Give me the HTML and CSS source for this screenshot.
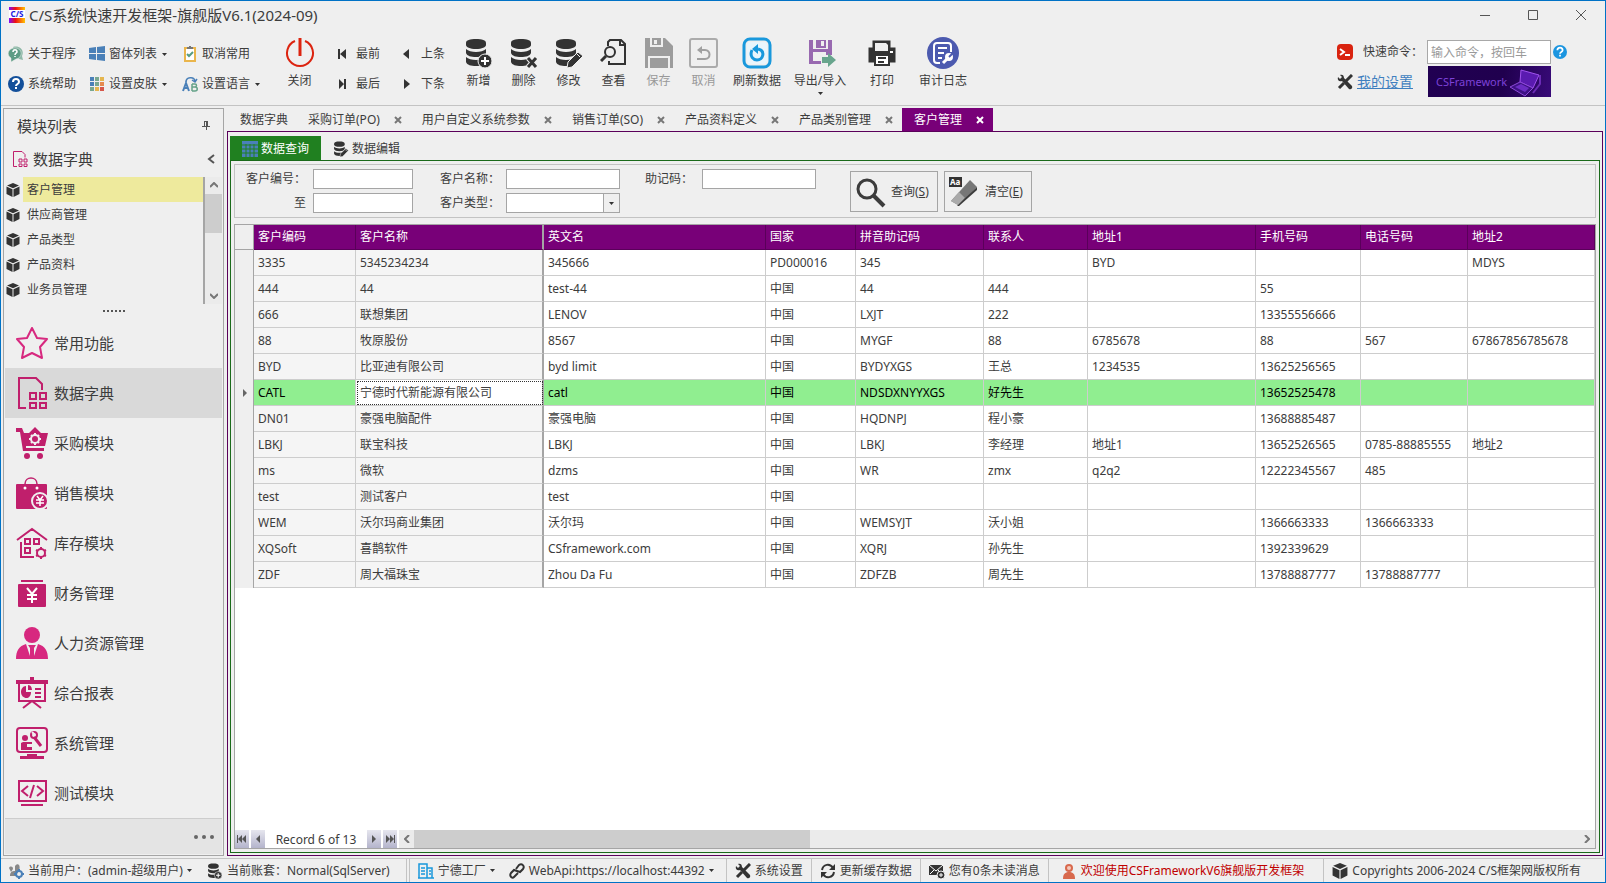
FILE: index.html
```
<!DOCTYPE html>
<html lang="zh-CN">
<head>
  <meta charset="UTF-8">
  <meta name="viewport" content="width=device-width, initial-scale=1.0">
  <title>C/S系统快速开发框架-旗舰版V6.1(2024-09)</title>
  <link rel="stylesheet" href="styles.css">
</head>
<body>

  <!-- Shared icons -->
  <svg class="sprite" aria-hidden="true">
    <symbol id="db" viewBox="0 0 28 30">
      <path d="M1 5c0-3 4-4 10-4s10 1 10 4v2c0 2-4 4-10 4S1 9 1 7zM1 11c2 2 6 3 10 3s8-1 10-3v4c-1 3-5 4-10 4S2 18 1 15zM1 19c2 2 6 3 10 3s8-1 10-3v5c-1 3-5 4-10 4S2 27 1 24z"/>
    </symbol>
    <symbol id="db-add" viewBox="0 0 28 30">
      <use href="#db" width="28" height="30"/>
      <circle cx="20" cy="23" r="7" fill="#333" stroke="#efefef"/>
      <path d="M20 19v8M16 23h8" stroke="#fff" stroke-width="2"/>
    </symbol>
    <symbol id="db-edit" viewBox="0 0 28 30">
      <use href="#db" width="28" height="30"/>
      <path d="M12 30l1-6 10-10 5 4-11 11z" stroke="#efefef"/>
      <path d="M22 16l3 3" stroke="#efefef"/>
    </symbol>
    <symbol id="cube" viewBox="0 0 14 14">
      <path d="M7 0l6 2.500-6 2.700L1 2.500zM0.500 3.500l6 2.800V14l-6-3zM13.500 3.500l-6 2.800V14l6-3z"/>
    </symbol>
    <symbol id="tools" viewBox="0 0 16 16">
      <path d="M1 3l2 2 2-2-2-2c2-1 4 0 4 3l8 8c1 2-1 4-3 3L5 7C2 8 0 6 1 3z"/>
      <path d="M15 1l-6 6M7 9l-5 5" stroke="#333" stroke-width="3"/>
    </symbol>
    <symbol id="dict" viewBox="0 0 32 32">
      <path d="M10 31H3V1h17l6 6v6" fill="none" stroke="#c01f6c" stroke-width="2"/>
      <path d="M14 16h6v6h-6zM24 16h6v6h-6zM14 26h6v5h-6zM24 26h6v5h-6z" fill="none" stroke="#c01f6c" stroke-width="2"/>
    </symbol>
    <symbol id="help" viewBox="0 0 16 16">
      <circle cx="8" cy="8" r="8"/>
      <path d="M5 6c0-4 6-4 6 0 0 2-3 2-3 4" fill="none" stroke="#fff" stroke-width="2"/>
      <path d="M7 11h2v2H7z" fill="#fff"/>
    </symbol>
    <symbol id="caret" viewBox="0 0 5 3"><path d="M0 0h5L2.500 3z"/></symbol>
    <symbol id="cross" viewBox="0 0 8 8"><path d="M1 1l6 6M7 1L1 7" stroke="currentColor" stroke-width="2"/></symbol>
  </svg>

  <div class="window">
    <header class="titlebar">
      <svg class="icon16" viewBox="0 0 16 16">
        <defs><linearGradient id="logo"><stop offset="0" stop-color="#7b0cff"/><stop offset="0.400" stop-color="#f01010"/><stop offset="1" stop-color="#ffc400"/></linearGradient></defs>
        <rect width="16" height="16" fill="url(#logo)"/>
        <rect y="3" width="16" height="8" fill="#fff"/>
        <text x="8" y="10" text-anchor="middle" class="logo-text">C/S</text>
      </svg>
      <h1>C/S系统快速开发框架-旗舰版V6.1(2024-09)</h1>
      <div class="window-buttons">
        <button aria-label="最小化"><svg width="10" height="10"><path d="M0 5.500h10"/></svg></button>
        <button aria-label="最大化"><svg width="10" height="10"><path d="M0.500 0.500h9v9h-9z"/></svg></button>
        <button aria-label="关闭窗口"><svg width="10" height="10"><path d="M0 0l10 10M10 0L0 10"/></svg></button>
      </div>
    </header>

    <div class="ribbon">
      <div class="small-group col-about">
        <button><svg class="icon16" viewBox="0 0 16 16"><path d="M5 1c6-2 12 3 9 9l1 4-4-1" fill="#8fb9a8"/><path d="M7 2c8 0 8 10 1 11l-5 3v-4C-2 9 0 2 7 2z" fill="#5e9c85" stroke="#efefef" stroke-width="0.500"/><path d="M5 6c0-3 4-3 4 0 0 1-2 1-2 3M7 10v1" fill="none" stroke="#fff" stroke-width="1.500"/></svg>关于程序</button>
        <button><svg class="icon16" fill="#134f9a"><use href="#help"/></svg>系统帮助</button>
      </div>
      <div class="small-group col-forms">
        <button><svg class="icon16" viewBox="0 0 16 16" fill="#4a80b8"><path d="M0 2l7-1v6H0zM8 1l8-1v7H8zM0 8h7v6l-7-1zM8 8h8v7l-8-1z"/></svg>窗体列表<svg class="caret"><use href="#caret"/></svg></button>
        <button><svg class="icon16" viewBox="0 0 16 16"><path d="M1 1h4v4H1zM1 6h4v4H1z" fill="#4a80b8"/><path d="M1 11h4v4H1zM6 6h4v4H6zM6 1h4v4H6z" fill="#78a790"/><path d="M11 1h4v4h-4zM6 11h4v4H6z" fill="#e5b64f"/><path d="M11 6h4v4h-4z" fill="#e58a4f"/><path d="M11 11h4v4h-4z" fill="#d6574a"/></svg>设置皮肤<svg class="caret"><use href="#caret"/></svg></button>
      </div>
      <div class="small-group col-lang">
        <button><svg class="icon16" viewBox="0 0 16 16"><path d="M3 2h10v13H3z" fill="#fff" stroke="#eab54b" stroke-width="2"/><path d="M5 3V1h2V0h2v1h2v2z" fill="#777"/><path d="M5 8l2 2 4-4" fill="none" stroke="#589c82" stroke-width="2"/></svg>取消常用</button>
        <button><svg class="icon16" viewBox="0 0 16 16"><path d="M1 15l3-8 3 8M2 12h4" fill="none" stroke="#4a80b8" stroke-width="2"/><path d="M10 8v7M10 8h3c2 0 2 3 0 3h-3 3c3 0 3 4 0 4h-3" fill="none" stroke="#65a389" stroke-width="1.500"/><path d="M4 6c0-5 8-6 9-1M10 4l3 2 2-3" fill="none" stroke="#4a80b8" stroke-width="1.500"/></svg>设置语言<svg class="caret"><use href="#caret"/></svg></button>
      </div>

      <button class="big close-btn"><svg width="32" height="32" viewBox="0 0 32 32" fill="none" stroke="#dc2410" stroke-width="2"><path d="M11 4a13 13 0 1 0 10 0"/><path d="M16 1v18" stroke-width="3"/></svg>关闭</button>

      <div class="small-group col-first">
        <button><svg class="icon16" viewBox="0 0 16 16"><path d="M4 3h2v10H4zM12 3v10L6 8z"/></svg>最前</button>
        <button><svg class="icon16" viewBox="0 0 16 16"><path d="M10 3h2v10h-2zM5 3v10l5-5z"/></svg>最后</button>
      </div>
      <div class="small-group col-step">
        <button><svg class="icon16" viewBox="0 0 16 16"><path d="M10 3v10L4 8z"/></svg>上条</button>
        <button><svg class="icon16" viewBox="0 0 16 16"><path d="M5 3v10l6-5z"/></svg>下条</button>
      </div>

      <div class="big-group">
        <button class="big"><svg width="28" height="32"><use href="#db-add"/></svg>新增</button>
        <button class="big"><svg width="28" height="32" viewBox="0 0 28 30"><use href="#db" width="28" height="30"/><path d="M18 20l8 9M26 20l-8 9" stroke="#efefef" stroke-width="5"/><path d="M18 20l8 9M26 20l-8 9" stroke="#333" stroke-width="3"/></svg>删除</button>
        <button class="big"><svg width="28" height="32"><use href="#db-edit"/></svg>修改</button>
        <button class="big"><svg width="28" height="32" viewBox="0 0 28 32" fill="none" stroke="#333"><path d="M8 9V5l2-2h11l4 4v20H9v-3M20 3v5h5" stroke-width="2"/><circle cx="10" cy="15" r="5" stroke-width="2"/><path d="M6 19l-5 5" stroke-width="3"/></svg>查看</button>
        <button class="big" disabled><svg width="32" height="32" viewBox="0 0 32 32" fill="#9c9c9c"><path d="M2 1h20l8 8v22h-3V19H5v12H2z"/><path d="M7 1h13v9H7z" fill="#efefef"/><path d="M9 1h9v7H9z"/><path d="M11 3h3v4h-3z" fill="#efefef"/><path d="M7 21h18v10H7z"/></svg>保存</button>
        <button class="big" disabled><svg width="32" height="32" viewBox="0 0 32 32" fill="none" stroke="#ababab"><rect x="2" y="2" width="27" height="28" rx="2" stroke-width="2"/><path d="M9 22h8c6 0 6-9 0-9h-6" stroke="#a0a0a0" stroke-width="2"/><path d="M9 13l5-4v8z" fill="#a0a0a0" stroke="none"/></svg>取消</button>
        <button class="big wide"><svg width="32" height="32" viewBox="0 0 32 32" fill="none" stroke="#1998dc"><rect x="3" y="2" width="26" height="28" rx="6" stroke-width="3"/><rect x="6" y="5" width="20" height="22" rx="4" fill="#e9f5fc" stroke="none"/><path d="M11 13c-3 7 2 10 5 10 6 0 9-9 1-11" stroke-width="3"/><path d="M17 7v10l-6-5z" fill="#1998dc" stroke="none"/></svg>刷新数据</button>
        <button class="big export"><svg width="32" height="32" viewBox="0 0 32 32"><path d="M5 3h23v15h-6v-3H9v9h8v3H5z" fill="#9869b0"/><path d="M9 3h15v9H9z" fill="#efefef"/><path d="M12 3h10v8H12z" fill="#9869b0"/><path d="M17 4h3v5h-3z" fill="#efefef"/><path d="M18 20h6v-4l8 7-8 7v-4h-6z" fill="#68a58d"/></svg>导出/导入<svg class="caret"><use href="#caret"/></svg></button>
        <button class="big print"><svg width="32" height="32" viewBox="0 0 32 32"><path d="M8 13V5h15v8M4 12h24v12H4z" stroke="#333" stroke-width="3" fill="#333"/><path d="M9 6h11l2 2v6H9z" fill="#efefef"/><path d="M9 18h14v10H9z" fill="#fff" stroke="#333" stroke-width="2"/><path d="M12 21h8M12 25h6" stroke="#333" stroke-width="2"/><path d="M24 14h3v2h-3z" fill="#fff"/></svg>打印</button>
        <button class="big wide"><svg width="32" height="32" viewBox="0 0 32 32" fill="none" stroke="#fff" stroke-width="2"><circle cx="16" cy="16" r="16" fill="#4c5aaf" stroke="none"/><path d="M13 26h-3c-2 0-3-1-3-3V9c0-2 1-3 3-3h11c2 0 3 1 3 3v6M11 11h9M11 16h6M11 21h4"/><path d="M16 26l5-5" stroke-width="3"/><circle cx="22" cy="20" r="3" fill="#fff"/><path d="M22 20l4-4" stroke="#4c5aaf"/></svg>审计日志</button>
      </div>

      <div class="quick">
        <div class="quick-row">
          <svg class="icon16" viewBox="0 0 16 16"><rect width="16" height="16" rx="4" fill="#d9230f"/><path d="M3 5l4 3-4 3M8 11h5" fill="none" stroke="#fff" stroke-width="2"/></svg>
          <label for="command">快速命令：</label>
          <input type="text" id="command" placeholder="输入命令，按回车">
          <svg class="icon14" viewBox="0 0 16 16" fill="#1b95e0"><use href="#help"/></svg>
        </div>
        <div class="quick-row">
          <svg class="icon16"><use href="#tools"/></svg>
          <a href="#">我的设置</a>
          <div class="banner">
            <span>CSFramework</span>
            <svg width="34" height="30" viewBox="0 0 34 30"><path d="M12 3l18 5-6 13-13-6z" fill="#5a1bb0" stroke="#a052ee"/><path d="M1 20l10-5 13 6-8 8z" fill="#3d1184" stroke="#8d49d8"/><path d="M6 20l6-3 8 4-4 4z" fill="#6c2cc4"/><path d="M31 8v9l-7 9" fill="none" stroke="#6b2bb5" stroke-width="2"/></svg>
          </div>
        </div>
      </div>
    </div>

    <div class="workspace">
      <aside class="sidebar">
        <div class="side-title"><h2>模块列表</h2>
          <button aria-label="固定"><svg width="8" height="10" viewBox="0 0 8 10"><path d="M2 0h4v5h2v1H5v3H4V6H0V5h2z" fill="#555"/><path d="M3 1h1v4H3z" fill="#efefef"/></svg></button>
        </div>
        <div class="side-title side-group"><svg class="icon16"><use href="#dict"/></svg><h2>数据字典</h2>
          <button aria-label="折叠"><svg width="8" height="10" viewBox="0 0 8 10" fill="none" stroke="#555" stroke-width="2"><path d="M7 1L2 5l5 4"/></svg></button>
        </div>
        <div class="tree">
          <ul>
            <li class="current"><svg class="icon14"><use href="#cube"/></svg><a href="#">客户管理</a></li>
            <li><svg class="icon14"><use href="#cube"/></svg><a href="#">供应商管理</a></li>
            <li><svg class="icon14"><use href="#cube"/></svg><a href="#">产品类型</a></li>
            <li><svg class="icon14"><use href="#cube"/></svg><a href="#">产品资料</a></li>
            <li><svg class="icon14"><use href="#cube"/></svg><a href="#">业务员管理</a></li>
          </ul>
          <div class="vscroll">
            <svg width="8" height="6"><path d="M0 5l4-4 4 4"/></svg>
            <div class="vthumb"></div>
            <svg width="8" height="6"><path d="M0 1l4 4 4-4"/></svg>
          </div>
        </div>
        <div class="splitter"></div>
        <nav class="modules">
          <a href="#"><svg viewBox="0 0 32 32"><path d="M16 1l5 10 10 1-7 8 2 11-10-5-10 5 2-11-7-8 10-1z" fill="none" stroke="#d7287f" stroke-width="2" stroke-linejoin="round"/></svg>常用功能</a>
          <a href="#" class="active"><svg><use href="#dict"/></svg>数据字典</a>
          <a href="#"><svg viewBox="0 0 32 32"><path d="M0 1h6l2 5h24l-3 13H10v2h18v3H7L4 5H0zM13 6l6-6 6 6z"/><circle cx="11" cy="29" r="3"/><circle cx="24" cy="29" r="3"/><circle cx="19" cy="12" r="4" fill="none" stroke="#efefef" stroke-width="2"/><path d="M19 6v2M19 16v2M13 12h2M23 12h2M15 8l1 1M22 15l1 1M23 8l-1 1M16 15l-1 1" stroke="#efefef" stroke-width="2"/></svg>采购模块</a>
          <a href="#"><svg viewBox="0 0 32 32"><rect y="7" width="31" height="25" rx="1"/><path d="M9 10V7c0-8 12-8 12 0v3" fill="none" stroke="#c01f6c" stroke-width="1.500"/><circle cx="9" cy="11" r="1.500" fill="#fff"/><circle cx="21" cy="11" r="1.500" fill="#fff"/><circle cx="24" cy="24" r="8" stroke="#efefef" stroke-width="2"/><path d="M21 19l3 4 3-4M20 23h8M20 26h8M24 23v6" fill="none" stroke="#fff" stroke-width="1.500"/></svg>销售模块</a>
          <a href="#"><svg viewBox="0 0 32 32" fill="none" stroke="#c01f6c" stroke-width="2"><path d="M1 13L16 2l15 11M5 15v15h13M9 12h5v5H9zM18 12h5v5h-5zM9 21h5v5H9z"/><circle cx="25" cy="26" r="4"/><path d="M25 20v2M25 30v2M20 23l2 1M28 28l2 1M30 23l-2 1M22 28l-2 1"/></svg>库存模块</a>
          <a href="#"><svg viewBox="0 0 32 32"><path d="M5 3h22v2H5z"/><rect x="2" y="7" width="28" height="23" rx="1"/><path d="M11 11l5 6 5-6M11 18h10M11 22h10M16 17v9" fill="none" stroke="#fff" stroke-width="2"/></svg>财务管理</a>
          <a href="#"><svg viewBox="0 0 32 32" fill="#d7287f"><circle cx="16" cy="8" r="8"/><path d="M0 32c0-8 3-13 10-15l4 12v-8l-2-3h8l-2 3v8l4-12c7 2 10 7 10 15z"/></svg>人力资源管理</a>
          <a href="#"><svg viewBox="0 0 32 32"><path d="M14 0h4v3h14v4H0V3h14z"/><path d="M3 7v17h26V7M7 31l9-7 9 7" fill="none" stroke="#c01f6c" stroke-width="2"/><path d="M10 9v6h5c0 9-10 7-10 0 0-3 2-6 5-6zM12 8c3 0 4 3 4 5h-4zM19 11h6v2h-6zM19 15h6v2h-6zM19 19h6v2h-6z"/></svg>综合报表</a>
          <a href="#"><svg viewBox="0 0 32 32"><rect x="1" y="1" width="30" height="24" rx="3" fill="none" stroke="#c01f6c" stroke-width="2"/><circle cx="9" cy="11" r="3"/><path d="M5 23v-7l2-1h9v2h-5v3h5v3zM11 27h10v2h7v3H4v-3h7z"/><path d="M18 10l7 9" stroke="#c01f6c" stroke-width="3"/><circle cx="18" cy="8" r="3" fill="none" stroke="#c01f6c" stroke-width="2"/><path d="M16 5l3 3" stroke="#efefef" stroke-width="2"/></svg>系统管理</a>
          <a href="#"><svg viewBox="0 0 32 32" fill="none" stroke="#c01f6c" stroke-width="2"><path d="M3 4h27v20H3zM5 28h22M12 9l-6 5 6 5M21 9l6 5-6 5M18 8l-4 13"/></svg>测试模块</a>
        </nav>
        <div class="side-footer"><button aria-label="更多"><svg width="20" height="4"><circle cx="2" cy="2" r="2"/><circle cx="10" cy="2" r="2"/><circle cx="18" cy="2" r="2"/></svg></button></div>
      </aside>

      <main>
        <div class="tabs">
          <button>数据字典</button>
          <button>采购订单(PO)<svg><use href="#cross"/></svg></button>
          <button>用户自定义系统参数<svg><use href="#cross"/></svg></button>
          <button>销售订单(SO)<svg><use href="#cross"/></svg></button>
          <button>产品资料定义<svg><use href="#cross"/></svg></button>
          <button>产品类别管理<svg><use href="#cross"/></svg></button>
          <button class="active">客户管理<svg><use href="#cross"/></svg></button>
        </div>

        <div class="page">
          <div class="subtabs">
            <button class="active"><svg class="icon16" viewBox="0 0 16 16"><path d="M0 0h16v16H0z" fill="#4a80b8"/><path d="M4 3v13M8 3v13M12 3v13M0 4h16M0 8h16M0 12h16" stroke="#208020"/></svg>数据查询</button>
            <button><svg class="icon16"><use href="#db-edit"/></svg>数据编辑</button>
          </div>

          <div class="content">
            <form class="search">
              <div class="fields codes">
                <label for="codeFrom">客户编号：</label><input type="text" id="codeFrom">
                <label for="codeTo">至</label><input type="text" id="codeTo">
              </div>
              <div class="fields names">
                <label for="custName">客户名称：</label><input type="text" id="custName">
                <label for="custType">客户类型：</label>
                <div class="select-wrap"><select id="custType"><option></option></select><span><svg class="caret"><use href="#caret"/></svg></span></div>
              </div>
              <div class="fields memo">
                <label for="memo">助记码：</label><input type="text" id="memo">
              </div>
              <div class="actions">
                <button type="button"><svg width="32" height="32" viewBox="0 0 32 32" fill="none" stroke="#3c3c3c"><circle cx="13" cy="13" r="9" stroke-width="3"/><path d="M19 19l11 11" stroke-width="4"/></svg>查询(<u>S</u>)</button>
                <button type="button"><svg width="32" height="32" viewBox="0 0 32 32"><rect x="1" y="1" width="13" height="10"/><text x="2" y="9" class="aa">Aa</text><path d="M3 25L22 4l7 7-19 18z" fill="#777"/><path d="M3 25l8-9 6 6-7 7z" fill="#aaa"/><path d="M17 22l12-11v3L11 30H9z" fill="#3c3c3c"/></svg>清空(<u>E</u>)</button>
              </div>
            </form>

            <div class="grid">
              <div class="grid-body">
                <table>
                  <colgroup>
                    <col class="c-mark"><col class="c-code"><col class="c-name"><col class="c-en"><col class="c-country"><col class="c-py"><col class="c-contact"><col class="c-addr"><col class="c-mobile"><col class="c-phone"><col>
                  </colgroup>
                  <thead>
                    <tr><th></th><th>客户编码</th><th>客户名称</th><th>英文名</th><th>国家</th><th>拼音助记码</th><th>联系人</th><th>地址1</th><th>手机号码</th><th>电话号码</th><th>地址2</th></tr>
                  </thead>
                  <tbody>
                    <tr><td></td><td>3335</td><td>5345234234</td><td>345666</td><td>PD000016</td><td>345</td><td></td><td>BYD</td><td></td><td></td><td>MDYS</td></tr>
                    <tr><td></td><td>444</td><td>44</td><td>test-44</td><td>中国</td><td>44</td><td>444</td><td></td><td>55</td><td></td><td></td></tr>
                    <tr><td></td><td>666</td><td>联想集团</td><td>LENOV</td><td>中国</td><td>LXJT</td><td>222</td><td></td><td>13355556666</td><td></td><td></td></tr>
                    <tr><td></td><td>88</td><td>牧原股份</td><td>8567</td><td>中国</td><td>MYGF</td><td>88</td><td>6785678</td><td>88</td><td>567</td><td>67867856785678</td></tr>
                    <tr><td></td><td>BYD</td><td>比亚迪有限公司</td><td>byd limit</td><td>中国</td><td>BYDYXGS</td><td>王总</td><td>1234535</td><td>13625256565</td><td></td><td></td></tr>
                    <tr class="selected"><td><svg width="4" height="8"><path d="M0 0l4 4-4 4z"/></svg></td><td>CATL</td><td class="focused">宁德时代新能源有限公司</td><td>catl</td><td>中国</td><td>NDSDXNYYXGS</td><td>好先生</td><td></td><td>13652525478</td><td></td><td></td></tr>
                    <tr><td></td><td>DN01</td><td>豪强电脑配件</td><td>豪强电脑</td><td>中国</td><td>HQDNPJ</td><td>程小豪</td><td></td><td>13688885487</td><td></td><td></td></tr>
                    <tr><td></td><td>LBKJ</td><td>联宝科技</td><td>LBKJ</td><td>中国</td><td>LBKJ</td><td>李经理</td><td>地址1</td><td>13652526565</td><td>0785-88885555</td><td>地址2</td></tr>
                    <tr><td></td><td>ms</td><td>微软</td><td>dzms</td><td>中国</td><td>WR</td><td>zmx</td><td>q2q2</td><td>12222345567</td><td>485</td><td></td></tr>
                    <tr><td></td><td>test</td><td>测试客户</td><td>test</td><td>中国</td><td></td><td></td><td></td><td></td><td></td><td></td></tr>
                    <tr><td></td><td>WEM</td><td>沃尔玛商业集团</td><td>沃尔玛</td><td>中国</td><td>WEMSYJT</td><td>沃小姐</td><td></td><td>1366663333</td><td>1366663333</td><td></td></tr>
                    <tr><td></td><td>XQSoft</td><td>喜鹊软件</td><td>CSframework.com</td><td>中国</td><td>XQRJ</td><td>孙先生</td><td></td><td>1392339629</td><td></td><td></td></tr>
                    <tr><td></td><td>ZDF</td><td>周大福珠宝</td><td>Zhou Da Fu</td><td>中国</td><td>ZDFZB</td><td>周先生</td><td></td><td>13788887777</td><td>13788887777</td><td></td></tr>
                  </tbody>
                </table>
              </div>
              <div class="pager">
                <button aria-label="第一条"><svg width="10" height="8"><path d="M0 0h1v8H0zM5 0v8L1 4zM9 0v8L5 4z"/></svg></button>
                <button aria-label="上一条"><svg width="4" height="8"><path d="M4 0v8L0 4z"/></svg></button>
                <span>Record 6 of 13</span>
                <button aria-label="下一条"><svg width="4" height="8"><path d="M0 0v8l4-4z"/></svg></button>
                <button aria-label="最后一条"><svg width="10" height="8"><path d="M9 0h1v8H9zM1 0v8l4-4zM5 0v8l4-4z"/></svg></button>
                <div class="hscroll">
                  <svg width="6" height="8"><path d="M5 0L1 4l4 4"/></svg>
                  <div class="htrack"><div class="hthumb"></div></div>
                  <svg width="6" height="8"><path d="M1 0l4 4-4 4"/></svg>
                </div>
              </div>
            </div>
          </div>
        </div>
      </main>
    </div>

    <footer class="status">
      <div class="cell user"><svg class="icon16" viewBox="0 0 16 16"><path d="M2 13c0-4 2-5 5-5V3c3-4 6 0 4 4l-3 6zM1 5c1-2 4-2 4 1L3 9z" fill="#888"/><circle cx="11" cy="11" r="3" fill="none" stroke="#4a80b8" stroke-width="2"/><path d="M11 6v2M11 14v2M6 11h2M14 11h2" stroke="#4a80b8" stroke-width="2"/></svg><span>当前用户：(admin-超级用户)</span><svg class="caret"><use href="#caret"/></svg></div>
      <div class="cell account"><svg class="icon16"><use href="#db-add"/></svg><span>当前账套：Normal(SqlServer)</span></div>
      <div class="cell factory sep"><svg class="icon16" viewBox="0 0 16 16" fill="none" stroke="#1998dc"><path d="M1 15V1h8v14M9 5h5v10M0 15h16M3 5h4M3 8h4M3 11h4M11 8h2M11 11h2" stroke-width="1.500"/></svg><span>宁德工厂</span><svg class="caret"><use href="#caret"/></svg></div>
      <div class="cell api"><svg class="icon16" viewBox="0 0 16 16" fill="none" stroke="#333" stroke-width="2"><path d="M7 6l3-4c3-2 6 1 4 4l-3 3-3-1M9 10l-4 4c-2 2-5-1-3-4l3-3 3 1"/></svg><span>WebApi:https://localhost:44392</span><svg class="caret"><use href="#caret"/></svg></div>
      <div class="cell sep"><svg class="icon16"><use href="#tools"/></svg><span>系统设置</span></div>
      <div class="cell sep"><svg class="icon16" viewBox="0 0 16 16" fill="none" stroke="#333" stroke-width="2"><path d="M2 7c1-6 8-7 11-2M14 9c-1 6-8 7-11 2"/><path d="M15 1v6H9zM1 15V9h6z" fill="#333" stroke="none"/></svg><span>更新缓存数据</span></div>
      <div class="cell sep"><svg class="icon16" viewBox="0 0 16 16"><path d="M0 2h14v10H0z"/><path d="M0 2l7 6 7-6M1 11l4-4M13 11L9 7" fill="none" stroke="#fff"/><circle cx="12" cy="12" r="4" stroke="#efefef"/><path d="M12 10v4M10 12h4" stroke="#fff"/></svg><span>您有0条未读消息</span></div>
      <div class="cell sep welcome"><svg class="icon16" viewBox="0 0 16 16" fill="#d8694d"><circle cx="8" cy="5" r="4"/><path d="M2 16c0-5 2-7 6-7s6 2 6 7z"/><circle cx="8" cy="5" r="2" fill="#f5c8ba"/></svg><span>欢迎使用CSFrameworkV6旗舰版开发框架</span></div>
      <div class="cell sep copyright"><svg class="icon16"><use href="#cube"/></svg><span>Copyrights 2006-2024 C/S框架网版权所有</span></div>
    </footer>
  </div>

</body>
</html>
```
FILE: styles.css
```
* {
  box-sizing: border-box;
}

body {
  margin: 0;
  font-family: "Noto Sans", "Noto Sans CJK SC", sans-serif;
  font-size: 12px;
  line-height: 18px;
  color: #3c3c3c;
  fill: #333;
  background-color: #efefef;
}

button, input, select {
  font: inherit;
  color: inherit;
}

button {
  display: flex;
  align-items: center;
  background: none;
  border: none;
  padding: 0;
  white-space: nowrap;
}

h1, h2 {
  margin: 0;
  font-size: 15px;
  font-weight: normal;
}

svg {
  flex: none;
}

.sprite {
  position: absolute;
  width: 0;
  height: 0;
}

.icon16 {
  width: 16px;
  height: 16px;
}

.icon14 {
  width: 14px;
  height: 14px;
}

.caret {
  width: 5px;
  height: 3px;
}

.window {
  display: flex;
  flex-direction: column;
  min-height: 100vh;
  border: 1px solid #0072c6;
}

/* Title bar */
.titlebar {
  display: flex;
  align-items: center;
  gap: 4px;
  height: 28px;
  padding-left: 8px;
}

.logo-text {
  font-size: 8px;
  font-weight: bold;
  fill: #2020e0;
}

.window-buttons {
  display: flex;
  margin-left: auto;
}

.window-buttons button {
  width: 48px;
  height: 28px;
  justify-content: center;
}

.window-buttons path {
  fill: none;
  stroke: #555;
}

/* Ribbon */
.ribbon {
  display: flex;
  align-items: flex-start;
  height: 77px;
  padding: 8px 6px 0 7px;
  border-bottom: 1px solid #c3c3c3;
}

.small-group {
  display: flex;
  flex-direction: column;
  gap: 6px;
  padding-top: 5px;
}

.small-group button {
  height: 24px;
  gap: 4px;
}

.small-group .caret {
  margin-left: 1px;
}

.col-about {
  width: 81px;
}

.col-forms {
  width: 93px;
}

.col-lang {
  width: 95px;
}

.col-first {
  width: 65px;
}

.col-step {
  width: 57px;
}

.col-first button, .col-step button {
  gap: 6px;
}

.big {
  flex-direction: column;
  width: 45px;
  line-height: 16px;
  gap: 4px;
}

.big .caret {
  margin-top: -1px;
}

.big:disabled {
  color: #999;
}

.close-btn {
  margin-right: 12px;
}

.big-group {
  display: flex;
}

.big.wide {
  width: 62px;
}

.big.export {
  width: 64px;
}

.big.print {
  width: 60px;
}

.quick {
  display: flex;
  flex-direction: column;
  gap: 2px;
  margin-left: auto;
  padding: 3px 48px 0 0;
}

.quick-row {
  display: flex;
  align-items: center;
  width: 214px;
}

.quick-row label {
  width: 64px;
  margin-left: auto;
}

.quick-row a {
  margin-left: 4px;
  font-size: 14px;
  color: #3f7fbf;
}

.quick-row input {
  width: 124px;
  height: 24px;
  padding: 0 3px;
  border: 1px solid #a8a8a8;
  background-color: #fff;
}

.quick-row input::placeholder {
  color: #999;
}

.quick-row .icon14 {
  margin: 0 -16px 0 2px;
}

.banner {
  display: flex;
  align-items: center;
  justify-content: space-between;
  width: 123px;
  height: 31px;
  margin-left: auto;
  padding: 0 8px;
  color: #7d42d8;
  font-size: 11px;
  background: linear-gradient(100deg, #210052, #20004e 60%, #380a78);
}

/* Workspace */
.workspace {
  flex: 1;
  display: flex;
  gap: 3px;
  padding: 2px;
  min-height: 0;
}

.sidebar {
  display: flex;
  flex-direction: column;
  width: 221px;
  flex: none;
  border: 1px solid #a5a5a5;
  padding: 1px;
}

.side-title {
  display: flex;
  align-items: center;
  height: 32px;
  padding: 0 12px;
}

.side-title button {
  margin-left: auto;
}

.side-group {
  margin-bottom: 2px;
  height: 33px;
  padding: 0 7px;
  gap: 5px;
}

.tree {
  display: flex;
}

.tree ul {
  flex: 1;
  margin: 0;
  padding: 0 0 2px;
  list-style: none;
  border-right: 2px solid #a5a5a5;
}

.tree li {
  display: flex;
  align-items: center;
  padding-left: 1px;
  gap: 3px;
}

.tree a {
  flex: 1;
  padding-left: 4px;
  line-height: 25px;
  color: inherit;
  text-decoration: none;
}

.tree .current a {
  background-color: #eeea9d;
}

.vscroll {
  display: flex;
  flex-direction: column;
  align-items: center;
  width: 17px;
  padding: 5px 0;
  background-color: #ebebeb;
}

.vscroll path, .hscroll path {
  fill: none;
  stroke: #777;
  stroke-width: 2;
}

.vthumb {
  width: 17px;
  height: 39px;
  margin: 6px 0 auto;
  background-color: #cdcdcd;
}

.splitter {
  width: 22px;
  height: 14px;
  margin: 0 auto;
  background: repeating-linear-gradient(90deg, #555 0 2px, transparent 2px 4px) 0 6px / 22px 2px no-repeat;
}

.modules {
  fill: #c01f6c;
}

.modules a {
  display: flex;
  align-items: center;
  gap: 6px;
  height: 50px;
  padding-left: 11px;
  font-size: 15px;
  color: inherit;
  text-decoration: none;
}

.modules svg {
  width: 32px;
  height: 32px;
}

.modules .active {
  background-color: #d9d9d9;
}

.side-footer {
  flex: 1;
  display: flex;
  align-items: center;
  justify-content: flex-end;
  padding-right: 8px;
  border-top: 1px solid #cdcdcd;
  background-color: #e4e4e4;
}

.side-footer svg {
  fill: #666;
}

/* Document tabs */
main {
  flex: 1;
  display: flex;
  flex-direction: column;
  min-width: 0;
}

.tabs {
  display: flex;
  padding-left: 2px;
}

.tabs button {
  height: 23px;
  gap: 14px;
  padding: 1px 9px 0 11px;
}

.tabs svg {
  width: 8px;
  height: 8px;
  color: #777;
}

.tabs .active {
  padding: 1px 9px 0 12px;
  color: #fff;
  background-color: #780078;
}

.tabs .active svg {
  color: #fff;
}

.page {
  flex: 1;
  display: flex;
  flex-direction: column;
  padding: 4px 2px 2px;
  border: 1px solid #5a005a;
}

.subtabs {
  display: flex;
}

.subtabs button {
  height: 24px;
  padding: 1px 12px 0;
  gap: 3px;
}

.subtabs .active {
  color: #fff;
  background-color: #208020;
}

.content {
  flex: 1;
  display: flex;
  flex-direction: column;
  gap: 6px;
  padding: 3px;
  border: 1px solid #1a6a1a;
}

/* Search panel */
.search {
  display: flex;
  align-items: flex-start;
  height: 54px;
  padding: 4px 11px;
  border: 1px solid #c3c3c3;
}

.fields {
  display: grid;
  gap: 4px 0;
  align-items: center;
}

.fields label {
  white-space: nowrap;
}

.codes {
  grid-template-columns: 67px 100px;
  margin-right: 27px;
}

.codes label + input + label {
  padding-left: 48px;
}

.names {
  grid-template-columns: 66px 114px;
  margin-right: 25px;
}

.memo {
  grid-template-columns: 57px 114px;
  margin-right: 34px;
}

.fields input, .select-wrap {
  width: 100%;
  height: 20px;
  border: 1px solid #a5a5a5;
  background-color: #fff;
}

.select-wrap {
  display: flex;
}

.select-wrap select {
  flex: 1;
  min-width: 0;
  appearance: none;
  border: none;
  background: none;
}

.select-wrap span {
  display: flex;
  align-items: center;
  justify-content: center;
  width: 16px;
  border-left: 1px solid #a5a5a5;
  background-color: #efefef;
}

.actions {
  display: flex;
  gap: 6px;
  padding-top: 2px;
}

.actions button {
  width: 88px;
  height: 41px;
  padding-left: 3px;
  border: 1px solid #a5a5a5;
}

.actions svg {
  margin-right: 5px;
}

.aa {
  font-size: 8px;
  font-weight: bold;
  fill: #fff;
}

/* Data grid */
.grid {
  flex: 1;
  display: flex;
  flex-direction: column;
  border: 1px solid #a5a5a5;
  background-color: #fff;
}

.grid-body {
  flex: 1;
  overflow: hidden;
}

table {
  width: 100%;
  table-layout: fixed;
  border-collapse: separate;
  border-spacing: 0;
}

.c-mark { width: 19px; }
.c-code { width: 102px; }
.c-name { width: 188px; }
.c-en { width: 222px; }
.c-country { width: 90px; }
.c-py { width: 128px; }
.c-contact { width: 104px; }
.c-addr { width: 168px; }
.c-mobile { width: 105px; }
.c-phone { width: 107px; }

th, td {
  height: 26px;
  padding: 0 0 0 4px;
  border-right: 1px solid #cdcdcd;
  border-bottom: 1px solid #cdcdcd;
  text-align: left;
  font-weight: normal;
  white-space: nowrap;
}

th {
  height: 25px;
  color: #fff;
  background-color: #780078;
  border-color: #5a005a;
}

th:first-child, td:first-child {
  padding-left: 8px;
  background-color: #efefef;
  border-right-color: #a5a5a5;
}

th:first-child {
  border-bottom-color: #a5a5a5;
}

td:first-child {
  border-bottom: none;
}

td:first-child svg {
  display: block;
  fill: #666;
}

td:nth-child(2), td:nth-child(3) {
  background-color: #f5f5f5;
}

th:nth-child(3), td:nth-child(3) {
  border-right: 2px solid #a5a5a5;
}

.selected td {
  color: #000;
}

.selected td:not(:first-child) {
  background-color: #90ee90;
}

.selected td.focused {
  color: #3c3c3c;
  background-color: #fff;
  outline: 1px dotted #333;
  outline-offset: -2px;
}

.pager {
  display: flex;
  height: 18px;
  gap: 2px;
}

.pager button {
  width: 14px;
  justify-content: center;
  background: linear-gradient(#e6e6ee, #b4b4cc);
}

.pager button svg {
  fill: #555;
}

.pager span {
  width: 98px;
  line-height: 20px;
  text-align: center;
}

.hscroll {
  flex: 1;
  display: flex;
  align-items: center;
  padding: 0 5px;
  gap: 4px;
  background-color: #ebebeb;
}

.htrack {
  flex: 1;
}

.hthumb {
  width: 34%;
  height: 18px;
  background-color: #cdcdcd;
}

/* Status bar */
.status {
  display: flex;
  height: 24px;
  border-top: 1px solid #c3c3c3;
}

.cell {
  display: flex;
  align-items: center;
  gap: 4px;
  padding: 0 8px;
  white-space: nowrap;
}

.cell.sep {
  border-left: 1px solid #c3c3c3;
}

.user {
  padding: 0 7px;
}

.account {
  padding-right: 16px;
}

.cell.factory {
  padding-right: 6px;
  border-left: 4px double #c3c3c3;
}

.api {
  padding-right: 12px;
}

.welcome {
  flex: 1;
  padding-left: 12px;
  color: #c00000;
}

.copyright {
  padding-right: 24px;
}
```
